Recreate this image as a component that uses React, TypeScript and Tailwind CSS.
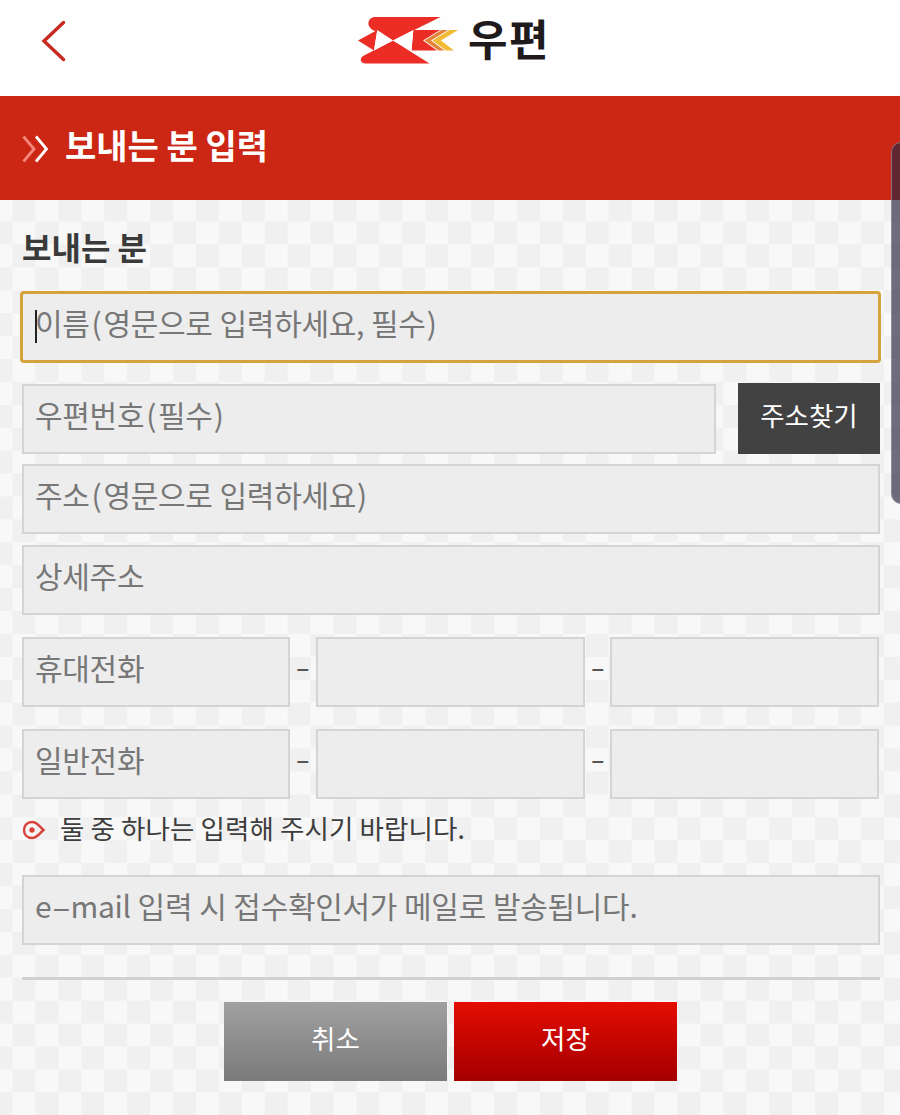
import React from 'react';

interface FieldProps {
  placeholder?: string;
  className?: string;
}

const MARK_STYLES: Record<string, string> = {
  '(': 'inline-block ml-[2px] mr-[2px]',
  ')': 'inline-block ml-[1px]',
  '-': 'inline-block scale-x-190 ml-[5px] mr-[4px]',
};

// brackets and hyphens get a bit more room than the font gives them
const Placeholder: React.FC<{ text: string }> = ({ text }) => (
  <span className="text-[30px] leading-none tracking-[-0.3px] [word-spacing:0.500px] text-[#777777] whitespace-pre">
    {text.split(/([()-])/).map((part, i) =>
      MARK_STYLES[part] ? <span key={i} className={MARK_STYLES[part]}>{part}</span> : part
    )}
  </span>
);

const Field: React.FC<FieldProps> = ({ placeholder = '', className = 'w-full' }) => (
  <div className={`h-[70px] border-2 border-[#d3d5d5] bg-[#ededed] pl-[11px] pb-[10px] flex items-center ${className}`}>
    <Placeholder text={placeholder} />
  </div>
);

const PhoneRow: React.FC<{ label: string; className: string }> = ({ label, className }) => (
  <div className={`flex items-center w-[857px] ${className}`}>
    <Field placeholder={label} className="w-[268px]" />
    <Dash />
    <Field className="w-[269px]" />
    <Dash />
    <Field className="w-[269px]" />
  </div>
);

const Dash: React.FC = () => (
  <span className="flex-1 flex justify-center pb-[12px] text-[28px] leading-none text-[#555555] scale-x-150">-</span>
);

const PostLogo: React.FC = () => (
  <svg width="102" height="52" viewBox="0 0 102 52">
    <path d="M16 2H82.500L35 25.500L14 14.500C8 10.500 10 3 16 2Z" fill="#ec2d25" />
    <path d="M35 25.500L71.500 48.500H8C2 48.500 1 43 6 40.500Z" fill="#ec2d25" />
    <path d="M0 25.500L19.300 15L16 35.500Z" fill="#ec2d25" />
    <path d="M55.300 15H82L65 25.500L79 35.500H53.500Z" fill="#ec2d25" />
    <path d="M19.300 15L35 25.500L16 35.500ZM55.300 15L35 25.500L53.500 35.500Z" fill="#fff" />
    <path d="M83.500 15H90L73 25.500L86.500 35.500H80.500L66.500 25.500Z" fill="#e5823a" />
    <path d="M91.500 15H100L83 25.500L96 35.500H88L74.500 25.500Z" fill="#f0b936" />
  </svg>
);

const App: React.FC = () => {
  return (
    <div className="relative w-[900px] h-[1115px] overflow-hidden bg-[#f8f8f8] font-['Noto_Sans_CJK_KR',sans-serif]">
      <header className="h-24 bg-[#fefefe] grid grid-cols-[358px_1fr]">
        <svg className="mt-[20px] ml-[40px]" width="28" height="44" viewBox="0 0 28 44">
          <path d="M23.500 2.500L4 21L23.500 39.500" fill="none" stroke="#c62a20" strokeWidth="3.4" strokeLinecap="round" />
        </svg>
        <div className="flex pt-[15px]">
          <PostLogo />
          <span className="ml-[8px] -mt-[3px] text-[43px] leading-[50px] font-bold tracking-[1.500px] text-[#1f1b1c]">우편</span>
        </div>
      </header>

      <div className="h-[104px] bg-[#cb2714] flex items-center pl-[22px]">
        <svg className="mt-[2px]" width="28" height="28" viewBox="0 0 28 28" fill="none" strokeWidth="2.8">
          <path d="M1.500 1.500L12 14L1.500 26.500" stroke="#f58578" />
          <path d="M14 1.500L24.500 14L14 26.500" stroke="#fff" />
        </svg>
        <h1 className="ml-[15px] mb-[6px] text-[34px] leading-none font-bold text-white">보내는 분 입력</h1>
      </div>

      <main className="h-[915px] pl-[22px] pt-[28px] bg-[repeating-conic-gradient(#f0f0f0_0_25%,#f8f8f8_0_50%)] bg-size-[45.870px_45.840px] bg-position-[12.500px_21.500px]">
        <h2 className="h-[63px] text-[32px] leading-[36px] font-bold text-[#3a3a3a]">보내는 분</h2>

        <div className="-ml-[2px] w-[861px] h-[72px] border-[3px] border-[#d6a23b] rounded-[4px] bg-[#ededed] flex items-center pl-[12px] pb-[10px]">
          <i className="w-[2px] h-[33px] -mr-[2px] mt-[8px] bg-[#222222]" />
          <Placeholder text="이름(영문으로 입력하세요, 필수)" />
        </div>

        <div className="flex mt-[21px] w-[858px] justify-between">
          <Field placeholder="우편번호(필수)" className="w-[694px]" />
          <button className="w-[142px] h-[71px] -mt-px pb-[8px] bg-[#424242] text-white text-[26.500px]">주소찾기</button>
        </div>
        <div className="w-[858px] mt-[10px] flex flex-col gap-[11px]">
          <Field placeholder="주소(영문으로 입력하세요)" />
          <Field placeholder="상세주소" />
        </div>

        <PhoneRow label="휴대전화" className="mt-[22px]" />
        <PhoneRow label="일반전화" className="mt-[22px]" />

        <div className="flex items-center h-[76px] pb-[15px]">
          <svg width="24" height="20" viewBox="0 0 24 20">
            <path d="M10 2C5 2 2 5.500 2 10S5 18 10 18C15 18 17 14 21.500 10C17 6 15 2 10 2Z" fill="none" stroke="#d9413b" strokeWidth="2.4" />
            <circle cx="10" cy="10" r="2.700" fill="#d9413b" />
          </svg>
          <p className="ml-[14px] mb-[2px] text-[26.500px] leading-none tracking-[0.1px] text-[#3d3d3d]">둘 중 하나는 입력해 주시기 바랍니다.</p>
        </div>

        <Field placeholder="e-mail 입력 시 접수확인서가 메일로 발송됩니다." className="w-[858px]" />

        <div className="w-[858px] mt-[32px] border-t-[3px] border-[#d1d1d1]" />
        <div className="flex gap-[7px] mt-[22px] ml-[202px] text-[26.500px] text-white">
          <button className="w-[223px] h-[79px] pb-[8px] bg-linear-to-b from-[#a0a0a0] to-[#7b7b7b]">취소</button>
          <button className="w-[223px] h-[79px] pb-[8px] bg-linear-to-b from-[#e40d00] to-[#a40000]">저장</button>
        </div>
      </main>

      {/* edge panel handle */}
      <div className="absolute left-[891px] top-[142px] w-[20px] h-[362px] rounded-[10px] border border-[#a5a0a8]/60 bg-[#2a2740]/67" />
    </div>
  );
};

export default App;
